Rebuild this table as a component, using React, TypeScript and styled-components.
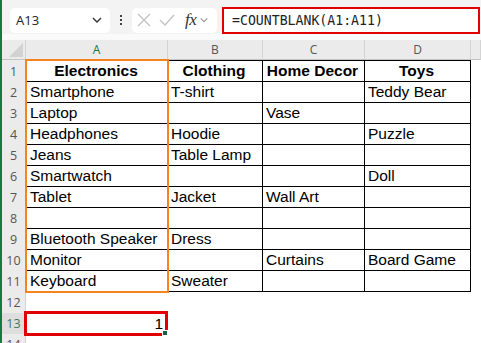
import React from 'react';
import styled, { createGlobalStyle } from 'styled-components';

const GlobalStyle = createGlobalStyle`
  html, body {
    margin: 0;
    padding: 0;
    background: #ffffff;
  }
  body {
    font-family: 'Liberation Sans', Arial, sans-serif;
  }
`;

const COLS = [142, 95, 102, 106];
const LETTERS = ['A', 'B', 'C', 'D'];
const GRID = `24px ${COLS.map((c) => `${c}px`).join(' ')} 1fr`;

const HEADERS = ['Electronics', 'Clothing', 'Home Decor', 'Toys'];

const DATA: string[][] = [
  ['Smartphone', 'T-shirt', '', 'Teddy Bear'],
  ['Laptop', '', 'Vase', ''],
  ['Headphones', 'Hoodie', '', 'Puzzle'],
  ['Jeans', 'Table Lamp', '', ''],
  ['Smartwatch', '', '', 'Doll'],
  ['Tablet', 'Jacket', 'Wall Art', ''],
  ['', '', '', ''],
  ['Bluetooth Speaker', 'Dress', '', ''],
  ['Monitor', '', 'Curtains', 'Board Game'],
  ['Keyboard', 'Sweater', '', ''],
];

const Window = styled.div`
  height: 343px;
  overflow: hidden;
  border-left: 2px solid #107c41;
  background: #ffffff;
`;

const Toolbar = styled.div`
  height: 40px;
  box-sizing: border-box;
  display: flex;
  align-items: center;
  padding: 0 1px 0 8px;
  background: linear-gradient(#f3f3f3 0, #f3f3f3 34px, #fafafa 34px);
`;

const NameBox = styled.div`
  width: 100px;
  height: 25px;
  box-sizing: border-box;
  display: flex;
  align-items: center;
  justify-content: space-between;
  padding: 0 7px 0 6px;
  background: #ffffff;
  border-radius: 5px;
  font-family: 'Open Sans', sans-serif;
  font-size: 13px;
  color: #222;
`;

const Dots = styled.div`
  width: 22px;
  display: flex;
  flex-direction: column;
  align-items: center;
  gap: 2px;

  span {
    width: 2px;
    height: 2px;
    background: #444;
  }
`;

const FuncBox = styled.div`
  width: 85px;
  height: 25px;
  box-sizing: border-box;
  display: flex;
  align-items: center;
  padding-left: 5px;
  gap: 8px;
  background: #ffffff;
  border-radius: 5px;
`;

const Fx = styled.span`
  font-family: 'Liberation Serif', 'Times New Roman', serif;
  font-style: italic;
  font-size: 17px;
  color: #333;
  margin-left: 2px;
  margin-right: -5px;
  letter-spacing: -0.5px;
`;

const FormulaBox = styled.div`
  flex: 1;
  height: 27px;
  margin-left: 5px;
  box-sizing: border-box;
  display: flex;
  align-items: center;
  padding-left: 8px;
  background: #ffffff;
  border: 2px solid #e00000;
  font-family: 'DejaVu Sans Mono', monospace;
  font-size: 13.2px;
  color: #222;
`;

const Sheet = styled.div`
  position: relative;
`;

const Row = styled.div<{ $h: number }>`
  display: grid;
  grid-template-columns: ${GRID};
  height: ${(p) => p.$h}px;
`;

const Corner = styled.div`
  position: relative;
  background: #ebebeb;
  border-right: 1px solid #d4d4d4;
  border-bottom: 1px solid #c4c4c4;

  &::after {
    content: '';
    position: absolute;
    right: 2px;
    bottom: 2px;
    border-style: solid;
    border-width: 0 0 14px 14px;
    border-color: transparent transparent #d2d2d2 transparent;
  }
`;

const ColHead = styled.div<{ $active?: boolean }>`
  background: #ebebeb;
  border-right: 1px solid #d4d4d4;
  border-bottom: 1px solid #c4c4c4;
  display: flex;
  align-items: center;
  justify-content: center;
  font-family: 'Open Sans', sans-serif;
  font-size: 12px;
  color: ${(p) => (p.$active ? '#137a3f' : '#555')};
`;

const RowHead = styled.div<{ $active?: boolean }>`
  background: ${(p) => (p.$active ? '#dedede' : '#ebebeb')};
  border-right: 1px solid #d4d4d4;
  display: flex;
  align-items: center;
  justify-content: center;
  font-family: 'Open Sans', sans-serif;
  font-size: 12.5px;
  color: ${(p) => (p.$active ? '#3f7a5a' : '#555')};
`;

const Cell = styled.div<{ $table?: boolean; $first?: boolean; $top?: boolean; $bold?: boolean; $right?: boolean }>`
  box-sizing: border-box;
  display: flex;
  align-items: center;
  justify-content: ${(p) => (p.$bold ? 'center' : p.$right ? 'flex-end' : 'flex-start')};
  padding: 0 5px 0 3px;
  overflow: hidden;
  white-space: nowrap;
  font-size: 15.5px;
  font-weight: ${(p) => (p.$bold ? 700 : 400)};
  color: #000;
  border-right: ${(p) => (p.$table ? '1px solid #000' : 'none')};
  border-bottom: ${(p) => (p.$table ? '1px solid #000' : 'none')};
  border-left: ${(p) => (p.$table && p.$first ? '1px solid #000' : 'none')};
  border-top: ${(p) => (p.$table && p.$top ? '1px solid #000' : 'none')};
`;

const Highlight = styled.div<{ $color: string; $w: number }>`
  position: absolute;
  box-sizing: border-box;
  border: ${(p) => p.$w}px solid ${(p) => p.$color};
  pointer-events: none;
`;

const FillHandle = styled.div`
  position: absolute;
  right: -3px;
  bottom: -3px;
  width: 4px;
  height: 4px;
  background: #1f5f3a;
  border: 1px solid #fff;
`;

const Chevron = ({ size = 12, color = '#333' }: { size?: number; color?: string }) => (
  <svg width={size} height={size} viewBox="0 0 12 12">
    <polyline points="2,4 6,8 10,4" fill="none" stroke={color} strokeWidth="1.4" />
  </svg>
);

const CrossIcon = () => (
  <svg width="14" height="14" viewBox="0 0 14 14">
    <line x1="1" y1="1" x2="13" y2="13" stroke="#c2c2c2" strokeWidth="1.3" />
    <line x1="13" y1="1" x2="1" y2="13" stroke="#c2c2c2" strokeWidth="1.3" />
  </svg>
);

const CheckIcon = () => (
  <svg width="16" height="14" viewBox="0 0 16 14">
    <polyline points="1,7 6,12 15,2" fill="none" stroke="#c2c2c2" strokeWidth="1.3" />
  </svg>
);

const App = () => {
  return (
    <>
      <GlobalStyle />
      <Window>
        <Toolbar>
          <NameBox>
            A13
            <Chevron />
          </NameBox>
          <Dots>
            <span />
            <span />
            <span />
          </Dots>
          <FuncBox>
            <CrossIcon />
            <CheckIcon />
            <Fx>fx</Fx>
            <Chevron size={10} color="#999" />
          </FuncBox>
          <FormulaBox>=COUNTBLANK(A1:A11)</FormulaBox>
        </Toolbar>

        <Sheet>
          <Row $h={20}>
            <Corner />
            {LETTERS.map((l) => (
              <ColHead key={l} $active={l === 'A'}>
                {l}
              </ColHead>
            ))}
            <ColHead />
          </Row>

          <Row $h={22}>
            <RowHead>1</RowHead>
            {HEADERS.map((h, i) => (
              <Cell key={h} $table $top $bold $first={i === 0}>
                {h}
              </Cell>
            ))}
            <Cell />
          </Row>

          {DATA.map((row, r) => (
            <Row key={r} $h={21}>
              <RowHead>{r + 2}</RowHead>
              {row.map((v, i) => (
                <Cell key={i} $table $first={i === 0}>
                  {v}
                </Cell>
              ))}
              <Cell />
            </Row>
          ))}

          <Row $h={21}>
            <RowHead>12</RowHead>
          </Row>
          <Row $h={21}>
            <RowHead $active>13</RowHead>
            <Cell $right>1</Cell>
          </Row>
          <Row $h={21}>
            <RowHead>14</RowHead>
          </Row>

          <Highlight $color="#f5841f" $w={2} style={{ left: 23, top: 19, width: 144, height: 234 }} />
          <Highlight $color="#e00000" $w={3} style={{ left: 22, top: 271, width: 144, height: 25 }}>
            <FillHandle />
          </Highlight>
        </Sheet>
      </Window>
    </>
  );
};

export default App;
